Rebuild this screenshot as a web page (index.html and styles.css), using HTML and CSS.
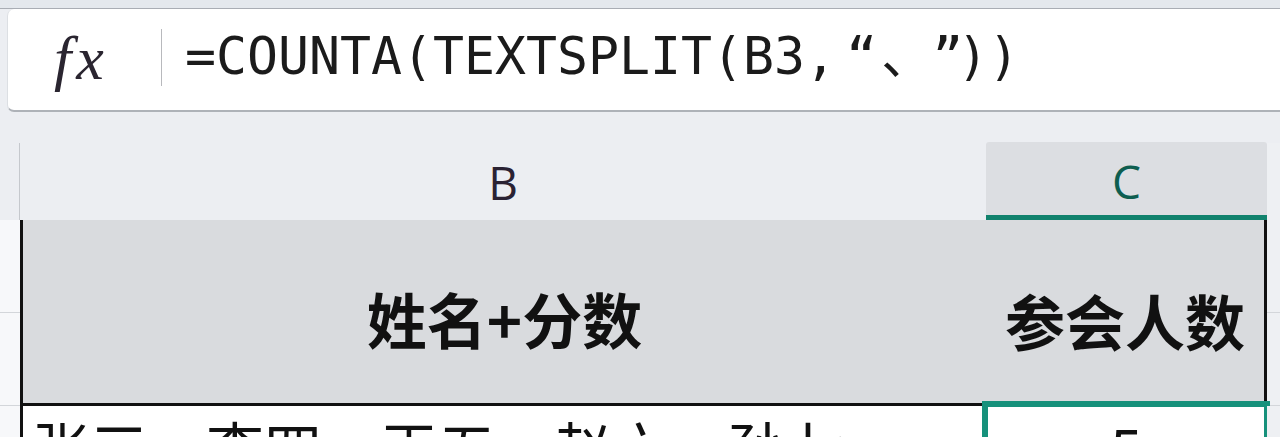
FILE: index.html
```html
<!DOCTYPE html>
<html lang="zh-CN">

<head>
    <meta charset="UTF-8">
    <meta name="viewport" content="width=device-width, initial-scale=1.0">
    <title>参会人数</title>
    <link rel="stylesheet" href="styles.css">
</head>

<body>
    <div class="top-strip"></div>

    <!-- 編輯欄 -->
    <div class="formula-bar">
        <span class="fx">fx</span>
        <span class="bar-divider"></span>
        <span class="formula">=COUNTA(TEXTSPLIT(B3,<span class="q q-open">“</span><span class="dun">、</span><span class="q">”</span>))</span>
    </div>

    <!-- 工作表 -->
    <div class="sheet">
        <div class="corner"></div>
        <div class="col-head">B</div>
        <div class="col-head selected">C</div>
        <div class="gutter"></div>

        <div class="row-head"><span></span><span></span></div>
        <div class="cell title">姓名+分数</div>
        <div class="cell title title-c">参会人数</div>
        <div class="gutter"><span></span><span></span></div>

        <div class="row-head"></div>
        <div class="cell data">张三、李四、王五、赵六、孙七</div>
        <div class="cell data active">5</div>
        <div class="gutter"></div>
    </div>
</body>

</html>
```

FILE: styles.css
```css
/* 整頁 */
body {
    margin: 0;
    width: 1280px;
    height: 437px;
    overflow: hidden;
    background-color: #eceef2;
    font-family: "Noto Sans CJK SC", sans-serif;
}

.top-strip {
    height: 8px;
    background-color: #e4e8ed;
    border-bottom: 1px solid #a9adb4;
}

/* 編輯欄 */
.formula-bar {
    display: flex;
    align-items: center;
    height: 103px;
    margin-left: 7px;
    background-color: #fff;
    border-left: 1px solid #dcdfe3;
    border-bottom: 2px solid #aeb2b8;
    border-radius: 7px 0 0 7px;
    box-sizing: border-box;
}

.fx {
    width: 153px;
    padding-left: 46px;
    box-sizing: border-box;
    font-family: "Liberation Serif", serif;
    font-style: italic;
    font-size: 62px;
    letter-spacing: 5px;
    color: #2a2530;
    margin-top: -2px;
}

.bar-divider {
    width: 1px;
    height: 57px;
    background-color: #b8b9bd;
    margin-top: -4px;
}

.formula {
    margin-left: 23px;
    margin-top: -16px;
    font-family: "DejaVu Sans Mono", "Noto Sans CJK SC", monospace;
    font-size: 51.5px;
    color: #1b1b1b;
    white-space: nowrap;
}

/* 引號與頓號各佔固定寬度 */
.formula .q,
.formula .dun {
    display: inline-block;
    box-sizing: border-box;
}

.formula .q {
    width: 31px;
    padding-left: 6px;
}

.formula .q-open {
    width: 39px;
    padding-left: 10px;
}

.formula .dun {
    width: 51px;
    padding-left: 6px;
    font-family: "Noto Sans CJK SC", sans-serif;
}

/* 工作表格線 */
.sheet {
    display: grid;
    grid-template-columns: 20px 966px 281px 13px;
    grid-template-rows: 77px 186px 60px;
    margin-top: 31px;
}

.corner {
    border-right: 1px solid #c5c8cd;
}

.col-head {
    display: flex;
    justify-content: center;
    align-items: center;
    font-family: "Open Sans", sans-serif;
    font-size: 46px;
    color: #2a2233;
}

.col-head.selected {
    background-color: #dcdee2;
    border-bottom: 5px solid #11826d;
    border-radius: 3px 3px 0 0;
    color: #0e5e50;
    padding-top: 4px;
    margin-top: -1px;
}

.row-head,
.gutter {
    display: flex;
    flex-direction: column;
    background-color: #f7f8fa;
}

.gutter {
    background-color: #eef0f3;
}

.row-head span,
.gutter span {
    flex: 1;
    border-bottom: 1px solid #d3d6da;
}

.cell {
    box-sizing: border-box;
    color: #111;
    white-space: nowrap;
    overflow: hidden;
}

.title {
    display: flex;
    justify-content: center;
    align-items: center;
    padding-top: 12px;
    font-size: 60px;
    font-weight: 700;
    background-color: #d9dbde;
    border-left: 3px solid #111;
    border-bottom: 3px solid #111;
}

.title-c {
    border-left: none;
    border-bottom: none;
    border-right: 3px solid #111;
}

.data {
    font-size: 58px;
    line-height: 1;
    padding: 11px 0 0 9px;
    background-color: #fff;
    border-left: 3px solid #111;
}

/* 選取中的儲存格 */
.data.active {
    margin: -5px -3px 0 -4px;
    padding: 12px 0 0;
    text-align: center;
    border: 6px solid #16917b;
    border-bottom: none;
}
```
